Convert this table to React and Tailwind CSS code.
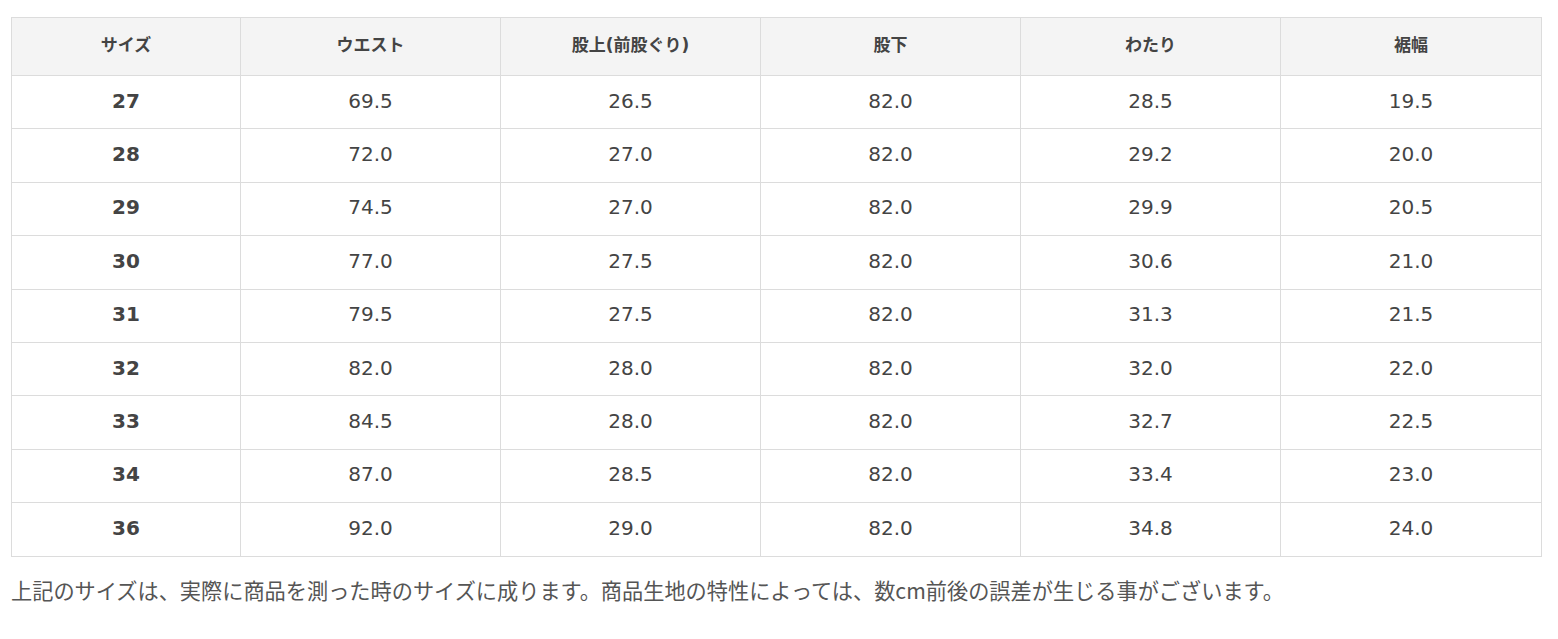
const headers = ["サイズ", "ウエスト", "股上(前股ぐり)", "股下", "わたり", "裾幅"];

const rows = [
  ["27", "69.5", "26.5", "82.0", "28.5", "19.5"],
  ["28", "72.0", "27.0", "82.0", "29.2", "20.0"],
  ["29", "74.5", "27.0", "82.0", "29.9", "20.5"],
  ["30", "77.0", "27.5", "82.0", "30.6", "21.0"],
  ["31", "79.5", "27.5", "82.0", "31.3", "21.5"],
  ["32", "82.0", "28.0", "82.0", "32.0", "22.0"],
  ["33", "84.5", "28.0", "82.0", "32.7", "22.5"],
  ["34", "87.0", "28.5", "82.0", "33.4", "23.0"],
  ["36", "92.0", "29.0", "82.0", "34.8", "24.0"],
];

export default function App() {
  return (
    <div className="bg-white min-h-screen pt-[17px] pl-[11px] text-[#444] font-['DejaVu_Sans','Noto_Sans_CJK_JP',sans-serif]">
      <table className="w-[1530px] border-collapse table-fixed">
        <colgroup>
          <col className="w-[229px]" />
          <col className="w-[260px]" />
          <col className="w-[260px]" />
          <col className="w-[260px]" />
          <col className="w-[260px]" />
          <col className="w-[261px]" />
        </colgroup>
        <thead>
          <tr className="h-[58px] bg-[#f4f4f4]">
            {headers.map((h) => (
              <th key={h} className="border border-[#dcdcdc] text-center text-[17px] font-bold pb-[2px]">
                {h}
              </th>
            ))}
          </tr>
        </thead>
        <tbody>
          {rows.map((r) => (
            <tr key={r[0]} className="h-[53.4px]">
              {r.map((v, i) => (
                <td
                  key={i}
                  className={`border border-[#dcdcdc] text-center text-[20px] pb-[3px] ${i === 0 ? "font-bold" : ""}`}
                >
                  {v}
                </td>
              ))}
            </tr>
          ))}
        </tbody>
      </table>
      {/* note under the table */}
      <p className="mt-[18px] text-[21.2px] leading-[30px] text-[#555] font-['Noto_Sans_CJK_JP',sans-serif]">
        上記のサイズは、実際に商品を測った時のサイズに成ります。商品生地の特性によっては、数cm前後の誤差が生じる事がございます。
      </p>
    </div>
  );
}
